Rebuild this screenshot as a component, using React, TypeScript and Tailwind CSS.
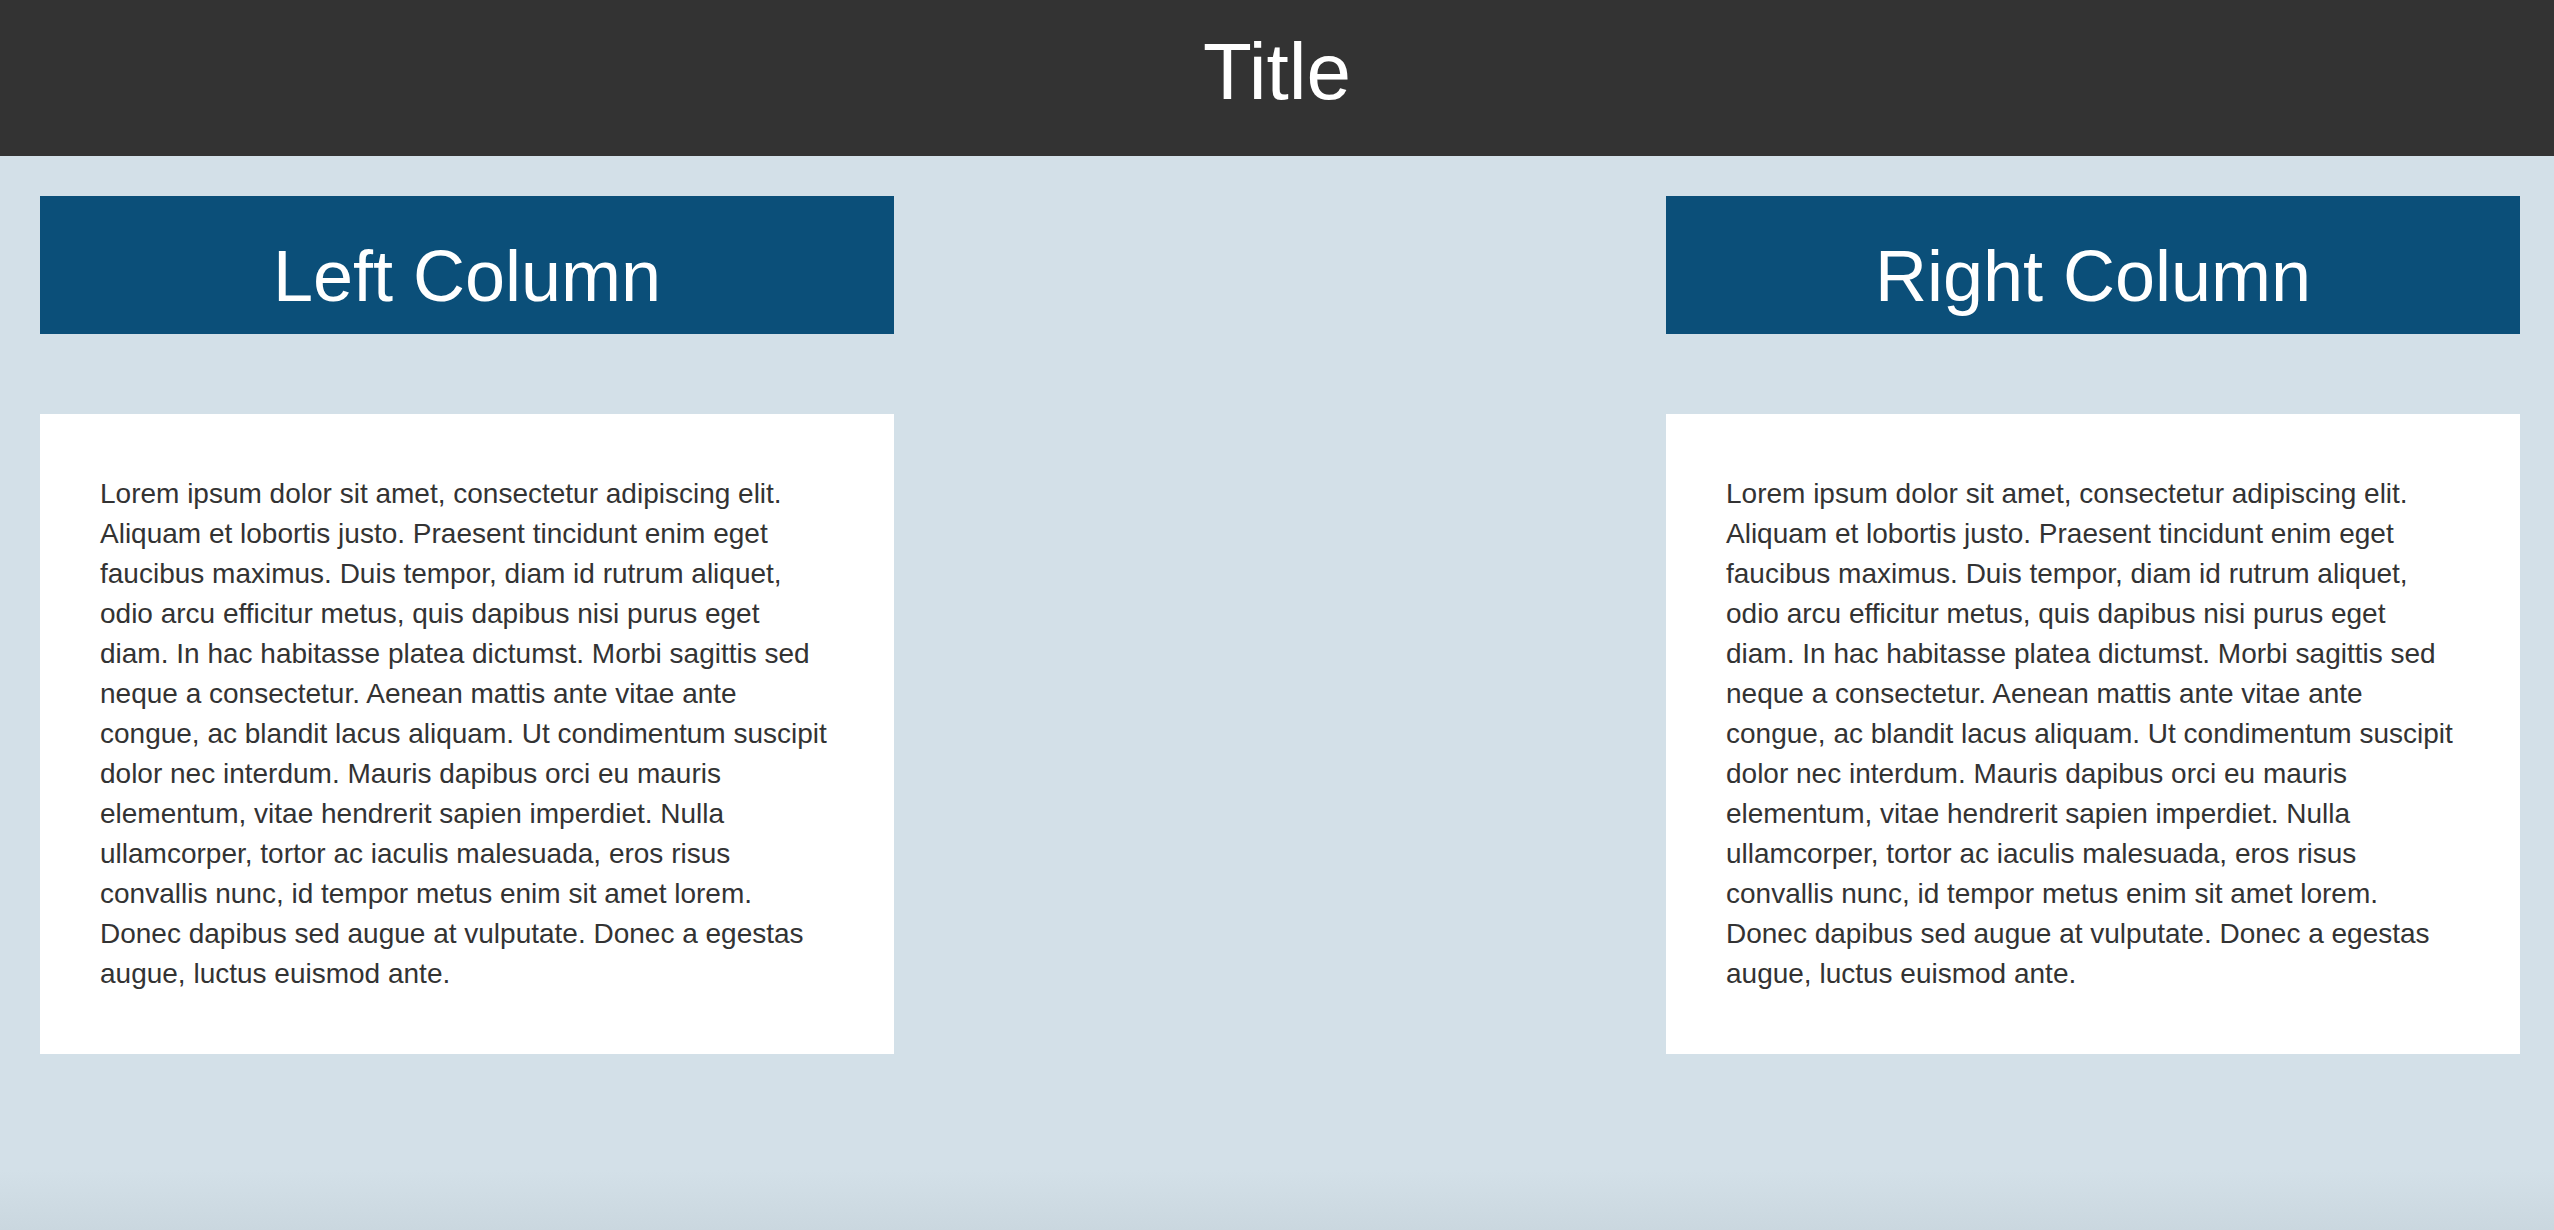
const LOREM =
  "Lorem ipsum dolor sit amet, consectetur adipiscing elit. Aliquam et lobortis justo. Praesent tincidunt enim eget faucibus maximus. Duis tempor, diam id rutrum aliquet, odio arcu efficitur metus, quis dapibus nisi purus eget diam. In hac habitasse platea dictumst. Morbi sagittis sed neque a consectetur. Aenean mattis ante vitae ante congue, ac blandit lacus aliquam. Ut condimentum suscipit dolor nec interdum. Mauris dapibus orci eu mauris elementum, vitae hendrerit sapien imperdiet. Nulla ullamcorper, tortor ac iaculis malesuada, eros risus convallis nunc, id tempor metus enim sit amet lorem. Donec dapibus sed augue at vulputate. Donec a egestas augue, luctus euismod ante.";

function Column({ title }: { title: string }) {
  return (
    <section className="w-[854px]">
      <h2 className="h-[138px] bg-[#0b4f79] pt-[44px] text-center text-[72px] leading-none text-white">
        {title}
      </h2>
      <div className="mt-[80px] bg-white p-[60px]">
        <p className="text-[28px] leading-[40px] text-[#333333]">{LOREM}</p>
      </div>
    </section>
  );
}

export default function App() {
  return (
    <div className="flex min-h-screen flex-col font-['Liberation_Sans',Arial,Helvetica,sans-serif]">
      <header className="h-[156px] bg-[#333333] pt-[32px] text-center text-[80px] leading-none text-white">
        <h1>Title</h1>
      </header>
      <main className="flex flex-1 justify-between bg-[linear-gradient(to_bottom,#d3e0e8_calc(100%-60px),#cad7df)] pl-[40px] pr-[34px] pt-[40px]">
        <Column title="Left Column" />
        <Column title="Right Column" />
      </main>
    </div>
  );
}
